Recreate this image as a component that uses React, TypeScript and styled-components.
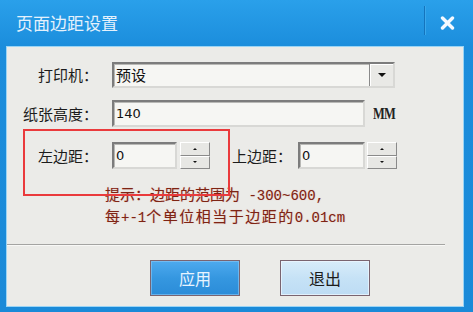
import styled, { createGlobalStyle } from 'styled-components';

const Global = createGlobalStyle`
  html, body {
    margin: 0;
    padding: 0;
    background: #fff;
  }
  body {
    width: 473px;
    height: 312px;
    overflow: hidden;
    font-family: "Noto Sans CJK SC", sans-serif;
  }
`;

const Dialog = styled.div`
  position: relative;
  width: 473px;
  height: 312px;
  box-sizing: border-box;
  padding: 0 10px 6px 7px;
  display: flex;
  flex-direction: column;
  background: linear-gradient(#2aa0ea 0px, #1b8ddc 47px, #1a8ad8 100%);
`;

const TitleBar = styled.div`
  height: 47px;
  display: flex;
  align-items: center;
  padding-left: 9px;
`;

const Title = styled.span`
  flex: 1;
  color: #e4f1fc;
  font-size: 17px;
  line-height: 20px;
  margin-top: -1px;
`;

const TitleSep = styled.div`
  width: 1px;
  height: 29px;
  margin-top: -6px;
  background: #1474bd;
  box-shadow: 1px 0 0 #3aa8ec;
`;

const CloseBtn = styled.div`
  width: 38px;
  display: flex;
  justify-content: flex-end;
  padding-right: 8px;
  box-sizing: border-box;
  margin-top: -2px;
`;

const Body = styled.div`
  flex: 1;
  background: #ebebe8;
  box-shadow: 0 0 0 1px #9ad4f5;
  display: flex;
  flex-direction: column;
  padding-top: 15px;
`;

const Row = styled.div<{ $mt?: number }>`
  display: flex;
  align-items: center;
  margin-top: ${(p) => p.$mt ?? 0}px;
`;

const Label = styled.span<{ $w?: number; $ml?: number }>`
  width: ${(p) => p.$w ?? 91}px;
  margin-left: ${(p) => p.$ml ?? 0}px;
  text-align: right;
  font-size: 15px;
  line-height: 20px;
  color: #1c1c1c;
  flex-shrink: 0;
`;

const Sunken = styled.div<{ $w: number; $h?: number; $ml?: number }>`
  width: ${(p) => p.$w}px;
  height: ${(p) => p.$h ?? 27}px;
  margin-left: ${(p) => p.$ml ?? 14}px;
  box-sizing: border-box;
  background: #f6f6f3;
  border: 2px solid;
  border-color: #7c7c7c #d8d8d5 #d8d8d5 #7c7c7c;
  box-shadow: inset 1px 1px 0 #b8b8b5;
  display: flex;
  align-items: center;
  padding-left: 2px;
  flex-shrink: 0;
`;

const FieldText = styled.span<{ $cjk?: boolean }>`
  font-family: ${(p) => (p.$cjk ? '"Noto Sans CJK SC", sans-serif' : 'Tahoma, "DejaVu Sans", sans-serif')};
  font-size: ${(p) => (p.$cjk ? 15 : 13)}px;
  color: #111;
  flex: 1;
  line-height: 18px;
`;

const DropBtn = styled.div`
  width: 24px;
  height: 100%;
  box-sizing: border-box;
  background: #e9e9e6;
  border-left: 1px solid #8a8a8a;
  box-shadow: inset 1px 1px 0 #fff;
  display: flex;
  align-items: center;
  justify-content: center;
`;

const Arrow = styled.span<{ $up?: boolean; $size?: number }>`
  width: 0;
  height: 0;
  border-left: ${(p) => p.$size ?? 4}px solid transparent;
  border-right: ${(p) => p.$size ?? 4}px solid transparent;
  ${(p) =>
    p.$up
      ? `border-bottom: ${Math.ceil((p.$size ?? 4) * 0.8)}px solid #111;`
      : `border-top: ${Math.ceil((p.$size ?? 4) * 0.8)}px solid #111;`}
`;

const Unit = styled.span`
  margin-left: 8px;
  font-family: "Liberation Serif", serif;
  font-weight: bold;
  font-size: 16px;
  letter-spacing: -1px;
  color: #222;
  transform: scaleX(0.78);
  transform-origin: left center;
`;

const Spin = styled.div<{ $ml?: number }>`
  width: 30px;
  height: 27px;
  margin-left: ${(p) => p.$ml ?? 3}px;
  display: flex;
  flex-direction: column;
  flex-shrink: 0;
`;

const SpinBtn = styled.div`
  flex: 1;
  box-sizing: border-box;
  background: #e7e7e4;
  border: 1px solid;
  border-color: #fff #8a8a8a #8a8a8a #fff;
  display: flex;
  align-items: center;
  justify-content: center;
`;

const Hint = styled.div`
  margin: 15px 0 0 98px;
  font-family: "Liberation Mono", "Noto Sans CJK SC", monospace;
  font-size: 14px;
  line-height: 19px;
  color: #7d2414;
  text-shadow: 0 0 1px rgba(220, 110, 90, 0.55);
  white-space: pre;
`;

const Cjk = styled.span<{ $ls?: number }>`
  font-family: "Noto Sans CJK SC", sans-serif;
  font-size: 15px;
  letter-spacing: ${(p) => p.$ls ?? 0}px;
`;

const Separator = styled.div`
  margin: 16px 18px 0 0;
  height: 1px;
  background: #a4a4a2;
  box-shadow: 0 1px 0 #f8f8f6;
`;

const ButtonRow = styled.div`
  display: flex;
  gap: 40px;
  margin: 15px 0 0 143px;
`;

const DlgButton = styled.div<{ $primary?: boolean }>`
  width: 90px;
  height: 36px;
  box-sizing: border-box;
  border: 1px solid #7a6470;
  display: flex;
  align-items: center;
  justify-content: center;
  font-size: 16px;
  color: ${(p) => (p.$primary ? '#e8f4ff' : '#1c1c1c')};
  background: ${(p) =>
    p.$primary
      ? 'linear-gradient(#4eaaee, #3597e0 50%, #2b8cd8)'
      : 'linear-gradient(#d8ecfa, #c6e2f6 50%, #bddcf4)'};
  box-shadow: inset 0 0 0 1px ${(p) => (p.$primary ? 'rgba(140,200,245,0.6)' : 'rgba(240,248,255,0.7)')};
`;

const Annotation = styled.div`
  position: absolute;
  left: 23px;
  top: 129px;
  width: 207px;
  height: 67px;
  box-sizing: border-box;
  border: 2px solid #ea3a3c;
  pointer-events: none;
`;

const SpinBox = ({ ml }: { ml?: number }) => (
  <Spin $ml={ml}>
    <SpinBtn>
      <Arrow $up $size={2} />
    </SpinBtn>
    <SpinBtn>
      <Arrow $size={2} />
    </SpinBtn>
  </Spin>
);

export default function App() {
  return (
    <>
      <Global />
      <Dialog>
        <TitleBar>
          <Title>页面边距设置</Title>
          <TitleSep />
          <CloseBtn>
            <svg width="15" height="14" viewBox="0 0 15 14">
              <path d="M2.5 2 L12.5 12 M12.5 2 L2.5 12" stroke="#f4f9ff" strokeWidth="3.4" strokeLinecap="round" />
            </svg>
          </CloseBtn>
        </TitleBar>
        <Body>
          <Row>
            <Label>打印机：</Label>
            <Sunken $w={283} $h={26}>
              <FieldText $cjk>预设</FieldText>
              <DropBtn>
                <Arrow />
              </DropBtn>
            </Sunken>
          </Row>
          <Row $mt={12}>
            <Label>纸张高度：</Label>
            <Sunken $w={253}>
              <FieldText>140</FieldText>
            </Sunken>
            <Unit>MM</Unit>
          </Row>
          <Row $mt={15}>
            <Label>左边距：</Label>
            <Sunken $w={65}>
              <FieldText>0</FieldText>
            </Sunken>
            <SpinBox />
            <Label $w={60} $ml={22}>
              上边距：
            </Label>
            <Sunken $w={67} $ml={6}>
              <FieldText>0</FieldText>
            </Sunken>
            <SpinBox ml={2} />
          </Row>
          <Hint>
            <Cjk>提示：边距的范围为</Cjk> -300~600,
            {'\n'}
            <Cjk $ls={1}>每</Cjk>+-1<Cjk $ls={1.5}>个单位相当于边距的</Cjk>0.01cm
          </Hint>
          <Separator />
          <ButtonRow>
            <DlgButton $primary>应用</DlgButton>
            <DlgButton>退出</DlgButton>
          </ButtonRow>
        </Body>
        <Annotation />
      </Dialog>
    </>
  );
}
